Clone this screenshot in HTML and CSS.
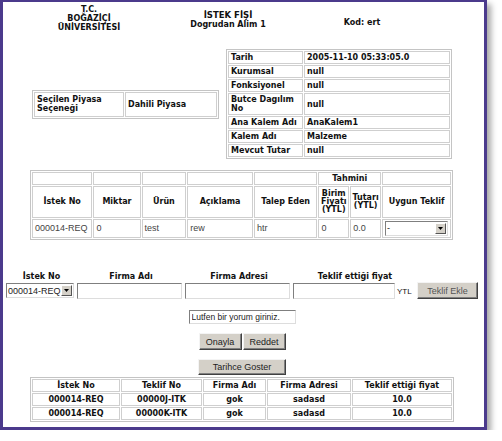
FILE: index.html
```html
<!DOCTYPE html>
<html lang="tr">
<head>
  <meta charset="UTF-8" />
  <title>İstek Fişi</title>
  <link rel="stylesheet" href="styles.css">
</head>
<body>
  <div class="frame">

    <div class="top">
      <div class="uni">T.C.<br>BOĞAZİÇİ<br>ÜNİVERSİTESİ</div>
      <div class="baslik">
        <div class="fis">İSTEK FİŞİ</div>
        <div>Dogrudan Alim 1</div>
      </div>
      <div class="kod">Kod: ert</div>
    </div>

    <div class="info">
      <table class="grid piyasa">
        <tr>
          <td class="lbl">Seçilen Piyasa Seçeneği</td>
          <td>Dahili Piyasa</td>
        </tr>
      </table>
      <table class="grid detay">
        <tr><td class="lbl">Tarih</td><td>2005-11-10 05:33:05.0</td></tr>
        <tr><td class="lbl">Kurumsal</td><td>null</td></tr>
        <tr><td class="lbl">Fonksiyonel</td><td>null</td></tr>
        <tr><td class="lbl">Butce Dagılım No</td><td>null</td></tr>
        <tr><td class="lbl">Ana Kalem Adı</td><td>AnaKalem1</td></tr>
        <tr><td class="lbl">Kalem Adı</td><td>Malzeme</td></tr>
        <tr><td class="lbl">Mevcut Tutar</td><td>null</td></tr>
      </table>
    </div>

    <table class="grid kalem">
      <tr class="ust">
        <th></th><th></th><th></th><th></th><th></th>
        <th colspan="2">Tahmini</th>
        <th></th>
      </tr>
      <tr class="bas">
        <th class="c1">İstek No</th>
        <th class="c2">Miktar</th>
        <th class="c3">Ürün</th>
        <th class="c4">Açıklama</th>
        <th class="c5">Talep Eden</th>
        <th class="c6">Birim Fiyatı (YTL)</th>
        <th class="c7">Tutarı (YTL)</th>
        <th class="c8">Uygun Teklif</th>
      </tr>
      <tr class="veri">
        <td>000014-REQ</td>
        <td>0</td>
        <td>test</td>
        <td>rew</td>
        <td>htr</td>
        <td>0</td>
        <td>0.0</td>
        <td>
          <div class="secim genis">
            <span class="secim-yazi">-</span>
            <span class="ok"><svg width="5" height="3" viewBox="0 0 5 3"><path d="M0 0h5L2.5 3z" fill="#000"/></svg></span>
          </div>
        </td>
      </tr>
    </table>

    <div class="teklif-form">
      <div class="etiket">İstek No</div>
      <div class="etiket">Firma Adı</div>
      <div class="etiket">Firma Adresi</div>
      <div class="etiket">Teklif ettiği fiyat</div>
      <div></div>

      <div class="secim">
        <span class="secim-yazi">000014-REQ</span>
        <span class="ok"><svg width="5" height="3" viewBox="0 0 5 3"><path d="M0 0h5L2.5 3z" fill="#000"/></svg></span>
      </div>
      <input type="text" class="alan" />
      <input type="text" class="alan" />
      <div class="fiyat"><input type="text" class="alan" /><span class="ytl">YTL</span></div>
      <button class="dugme ekle">Teklif Ekle</button>
    </div>

    <div class="onay">
      <input type="text" class="alan yorum" value="Lutfen bir yorum giriniz." />
      <div class="dugmeler">
        <button class="dugme">Onayla</button>
        <button class="dugme">Reddet</button>
      </div>
      <button class="dugme tarihce">Tarihce Goster</button>
    </div>

    <table class="grid gecmis">
      <tr>
        <th class="g1">İstek No</th>
        <th class="g2">Teklif No</th>
        <th class="g3">Firma Adı</th>
        <th class="g4">Firma Adresi</th>
        <th class="g5">Teklif ettiği fiyat</th>
      </tr>
      <tr>
        <td>000014-REQ</td><td>00000J-ITK</td><td>gok</td><td>sadasd</td><td>10.0</td>
      </tr>
      <tr>
        <td>000014-REQ</td><td>00000K-ITK</td><td>gok</td><td>sadasd</td><td>10.0</td>
      </tr>
    </table>

  </div>
</body>
</html>
```

FILE: styles.css
```css
* {
  margin: 0;
  padding: 0;
  box-sizing: border-box;
}

body {
  background-color: white;
  font-family: "DejaVu Sans", Verdana, sans-serif;
  font-size: 8px;
  font-weight: bold;
  color: #111;
}

.frame {
  width: 487px;
  height: 430px;
  border: 3px solid #4b3a8c;
  border-top-width: 2px;
  background: white;
  box-shadow: 4px 4px 6px rgba(0,0,0,0.35);
  display: flex;
  flex-direction: column;
}

/* ust kisim */
.top {
  display: grid;
  grid-template-columns: 118px 160px 108px;
  margin-left: 27px;
  padding-top: 3px;
  line-height: 9px;
  height: 47px;
  text-align: center;
}

.baslik {
  padding-top: 5px;
  line-height: 10px;
}

.fis {
  font-size: 8.5px;
}

.kod {
  padding-top: 13px;
}

/* tablolar */
.grid {
  border: 1px solid #c4c4c4;
  border-spacing: 1px;
  background: white;
}

.grid td,
.grid th {
  border: 1px solid #cfcfcf;
  padding: 1px 2px;
  line-height: 9px;
  text-align: left;
  vertical-align: middle;
}

.info {
  display: flex;
  align-items: center;
  justify-content: space-between;
  margin-left: 29px;
  width: 420px;
}

.piyasa {
  width: 187px;
}

.piyasa td {
  height: 25px;
}

.piyasa .lbl {
  width: 90px;
}

.detay {
  width: 226px;
}

.detay td {
  height: 12px;
}

.detay .lbl {
  width: 75px;
}

/* kalem tablosu */
.kalem {
  margin: 11px 0 0 27px;
  width: 423px;
}

.kalem th {
  text-align: center;
}

.kalem .ust th {
  height: 13px;
}

.kalem .bas th {
  height: 32px;
  line-height: 8px;
}

.kalem .veri td {
  height: 18px;
  font-family: "Liberation Sans", Arial, sans-serif;
  font-weight: normal;
  font-size: 9px;
  color: #444;
}

.c1 { width: 62px; }
.c2 { width: 48px; }
.c3 { width: 46px; }
.c4 { width: 67px; }
.c5 { width: 66px; }
.c6 { width: 31px; }
.c7 { width: 31px; }
.kalem .c6, .kalem .c7 { padding: 0; }

/* secim kutusu */
.secim {
  display: flex;
  align-items: center;
  justify-content: space-between;
  height: 15px;
  width: 68px;
  border: 1px solid #7f7f7f;
  border-right-color: #ddd;
  border-bottom-color: #ddd;
  background: white;
  font-family: "Liberation Sans", Arial, sans-serif;
  font-weight: normal;
  font-size: 9px;
  color: #222;
  padding-left: 1px;
}

.secim.genis {
  width: 63px;
}

.ok {
  width: 11px;
  height: 11px;
  margin-right: 1px;
  background: #d4d0c8;
  border: 1px solid;
  border-color: #fff #555 #555 #fff;
  display: flex;
  align-items: center;
  justify-content: center;
}

/* teklif formu */
.teklif-form {
  display: grid;
  grid-template-columns: 71px 108px 108px 124px 62px;
  grid-template-rows: 12px 17px;
  column-gap: 0;
  align-items: end;
  margin: 30px 0 0 3px;
}

.etiket {
  text-align: center;
  line-height: 10px;
}

.alan {
  height: 16px;
  border: 1px solid #7f7f7f;
  border-right-color: #ddd;
  border-bottom-color: #ddd;
  background: white;
  font-family: "Liberation Sans", Arial, sans-serif;
  font-size: 9px;
  color: #222;
  padding: 0 2px;
}

.teklif-form > .alan {
  width: 105px;
}

.teklif-form .secim {
  margin-bottom: 1px;
}

.fiyat {
  display: flex;
  align-items: center;
}

.fiyat .alan {
  width: 102px;
}

.ytl {
  font-family: "Liberation Sans", Arial, sans-serif;
  font-weight: normal;
  font-size: 8px;
  line-height: 8px;
  margin-left: 2px;
  margin-top: 2px;
}

.dugme {
  height: 17px;
  background: #d4d0c8;
  border: 1px solid;
  border-color: #f4f4f4 #404040 #404040 #f4f4f4;
  box-shadow: inset -1px -1px 0 #808080;
  font-family: "Liberation Sans", Arial, sans-serif;
  font-size: 9px;
  color: #222;
  padding: 0 5px;
}

.ekle {
  width: 61px;
  color: #555;
  margin-left: 0;
}

/* onay */
.onay {
  display: flex;
  flex-direction: column;
  align-items: center;
  margin-top: 11px;
  padding-right: 3px;
}

.yorum {
  width: 107px;
  height: 14px;
  font-size: 8.5px;
}

.dugmeler {
  display: flex;
  gap: 1px;
  margin-top: 9px;
}

.dugmeler .dugme {
  width: 43px;
}

.tarihce {
  width: 88px;
  height: 16px;
  margin-top: 9px;
}

/* gecmis */
.gecmis {
  margin: 2px 0 0 27px;
  width: 424px;
}

.gecmis th,
.gecmis td {
  text-align: center;
  height: 12px;
}

.g1 { width: 88px; }
.g2 { width: 81px; }
.g3 { width: 63px; }
.g4 { width: 84px; }
```
